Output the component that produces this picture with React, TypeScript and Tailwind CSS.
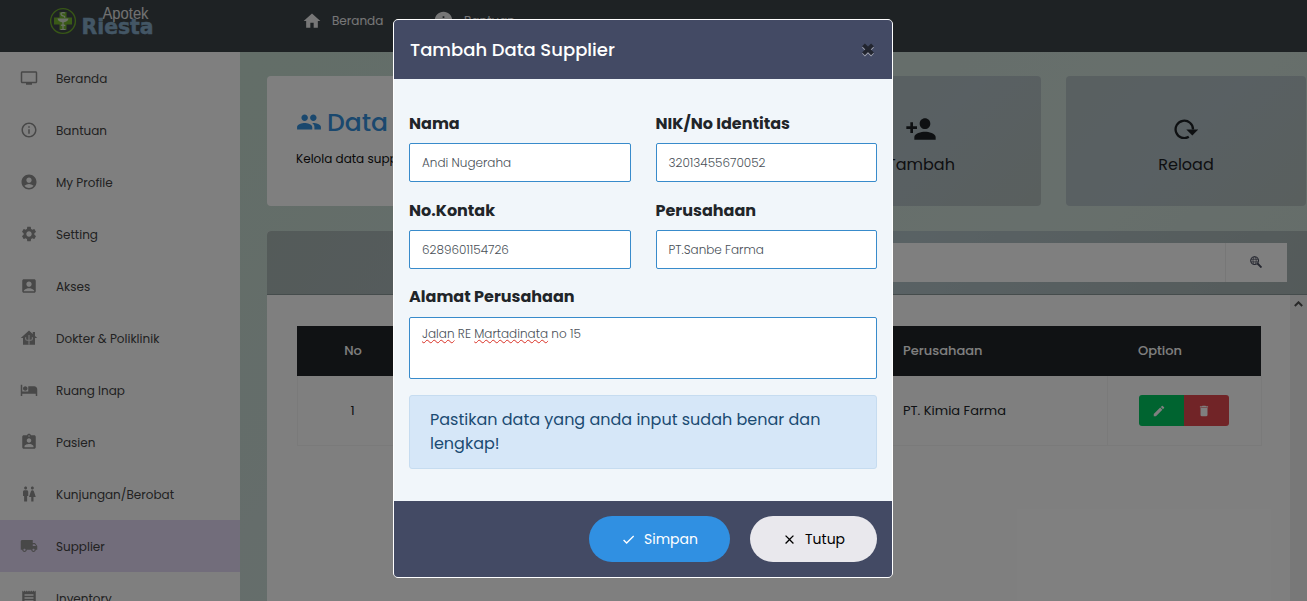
import React from "react";
import type { ReactNode } from "react";
import type { IconType } from "react-icons";
import {
  MdTv, MdInfoOutline, MdInfo, MdAccountCircle, MdSettings, MdAccountBox, MdLocalHotel,
  MdAssignmentInd, MdWc, MdLocalShipping, MdReceipt, MdHome, MdPeople, MdPersonAdd,
  MdEdit, MdDelete, MdCheck, MdClose,
} from "react-icons/md";

function ClinicIcon() {
  return (
    <svg viewBox="0 0 24 24" className="size-[18px]" fill="currentColor">
      <path d="M12 2 1 12h3v9h16v-9h3l-3-2.8V4h-3v2.5z" />
      <path d="M12 8v11M7.5 11v2a2 2 0 0 0 2 2H12M16.500 11v2a2 2 0 0 1-2 2H12M12 17v4" fill="none" stroke="#e8e8e8" strokeWidth="1.5" />
    </svg>
  );
}

function ReloadIcon() {
  return (
    <svg viewBox="0 0 24 20" className="h-5 w-6">
      <path d="M14.800 17.800A8.700 8.700 0 1 1 19 10.500" fill="none" stroke="currentColor" strokeWidth="2.300" />
      <path d="M12.300 10.500h12L18.300 16.500z" fill="currentColor" />
    </svg>
  );
}

function SearchWebIcon() {
  return (
    <svg viewBox="0 0 12 12" className="mb-0.5 mr-px size-3" fill="none" stroke="#4a4e60">
      <circle cx="4.600" cy="4.600" r="3.900" strokeWidth="1.100" />
      <ellipse cx="4.600" cy="4.600" rx="1.600" ry="3.900" strokeWidth=".7" />
      <path d="M1 3.300h7.200M1 5.900h7.200" strokeWidth=".7" />
      <path d="m7.500 7.500 4 4" strokeWidth="1.900" />
    </svg>
  );
}

function Logo() {
  return (
    <div className="flex w-[105px] items-start">
      <svg viewBox="0 0 28 28" className="mt-[7px] size-7 shrink-0">
        <circle cx="13" cy="14" r="12.400" fill="none" stroke="#6fae2c" strokeWidth="1.400" />
        <path d="M9.500 5h7v5.500H22v7h-5.500V23h-7v-5.500H4v-7h5.500z" fill="#74b52f" />
        <path d="M7.500 11.500h11c-.5 2.500-2.500 3.700-5.500 4-3-.3-5-1.500-5.500-4z" fill="#d5dfce" />
        <path d="M13 15v7.500M10.500 22.500h5M15 6c-3-1-5 .5-3.500 2s4 .8 3 2.800M11 18.500c1-1 3.500-1 4 .5" fill="none" stroke="#d5dfce" strokeWidth="1.200" />
      </svg>
      <svg viewBox="0 0 76 37" className="h-[37px] w-[76px] overflow-visible">
        <text x="24.500" y="18.500" textLength="46" lengthAdjust="spacingAndGlyphs" fontFamily="Liberation Sans, sans-serif" fontSize="16" fill="#e4e4e4">Apotek</text>
        <text x="3.500" y="34" textLength="72" lengthAdjust="spacingAndGlyphs" fontFamily="DejaVu Sans, sans-serif" fontWeight="700" fontSize="20.500" fill="#86adca" stroke="#86adca" strokeWidth=".5">Riesta</text>
      </svg>
    </div>
  );
}

const menu: { label: string; icon: IconType | typeof ClinicIcon; active?: boolean }[] = [
  { label: "Beranda", icon: MdTv },
  { label: "Bantuan", icon: MdInfoOutline },
  { label: "My Profile", icon: MdAccountCircle },
  { label: "Setting", icon: MdSettings },
  { label: "Akses", icon: MdAccountBox },
  { label: "Dokter & Poliklinik", icon: ClinicIcon },
  { label: "Ruang Inap", icon: MdLocalHotel },
  { label: "Pasien", icon: MdAssignmentInd },
  { label: "Kunjungan/Berobat", icon: MdWc },
  { label: "Supplier", icon: MdLocalShipping, active: true },
  { label: "Inventory", icon: MdReceipt },
];

function Sidebar() {
  return (
    <aside className="flex w-60 shrink-0 flex-col bg-white">
      {menu.map(({ label, icon: Icon, active }) => (
        <a key={label} className={`flex h-[52px] shrink-0 items-center gap-[18px] pl-5 text-xs text-[#444] ${active ? "bg-[#e4daf6]" : ""}`}>
          <span className="flex w-[18px] text-lg text-[#909090]"><Icon /></span>
          <span className="pt-0.5">{label}</span>
        </a>
      ))}
    </aside>
  );
}

function ActionCard({ icon, label }: { icon: ReactNode; label: string }) {
  return (
    <div className="flex h-[130px] w-60 shrink-0 flex-col items-center rounded-sm bg-[linear-gradient(135deg,#b2c0c2,#b2c0c6_50%,#b2bfbc)] pt-[37px] text-[#1d2124]">
      <div className="flex h-8 items-center text-[32px]">{icon}</div>
      <div className="mt-2 text-base">{label}</div>
    </div>
  );
}

function Content() {
  return (
    <main className="min-w-0 flex-1 overflow-hidden bg-[linear-gradient(135deg,#c6dcd0,#cadbd6_30%,#cfdfd8_60%,#c6d6d0)] pl-[27px] pt-6">
      <div className="flex gap-[25px]">
        <section className="h-[130px] w-[509px] shrink-0 rounded-sm bg-white pl-[29px] pt-[27px]">
          <h1 className="flex items-center gap-[5px] text-[25px] font-medium leading-10 text-[#3490dc]">
            <MdPeople className="mb-0.5 size-[26px]" />Data Supplier
          </h1>
          <p className="mt-1.5 text-xs leading-5 text-[#111]">Kelola data supplier</p>
        </section>
        <ActionCard icon={<MdPersonAdd />} label="Tambah" />
        <ActionCard icon={<ReloadIcon />} label="Reload" />
      </div>
      <section className="mt-[25px] h-[400px] overflow-hidden rounded-tl-sm bg-white">
        <div className="flex h-16 items-center justify-end border-b border-[#8b9898] bg-[linear-gradient(120deg,#a9b6b3,#abb9be_30%,#b3c4c9_60%,#a9b6b5)] pr-5">
          <div className="flex h-[39px] w-[500px] bg-white">
            <div className="flex-1 border-r border-[#eee]" />
            <div className="flex w-[61px] items-center justify-center"><SearchWebIcon /></div>
          </div>
        </div>
        <div className="flex h-[336px]">
          <div className="flex-1 pl-[30px] pt-[31px]">
            <div className="w-[965px] text-[13px]">
              <div className="flex h-[50px] w-[964px] items-center bg-[#212529] pb-px font-medium text-white">
                <div className="w-28 text-center">No</div>
                <div className="w-[494px]" />
                <div className="w-[204px]">Perusahaan</div>
                <div className="w-[154px] pl-[31px]">Option</div>
              </div>
              <div className="flex h-[70px] items-stretch border border-t-0 border-[#f4f4f4] text-[#212529]">
                <div className="flex w-[109px] items-center justify-center pt-px">1</div>
                <div className="w-[496px]" />
                <div className="flex w-[205px] items-center border-r border-[#f4f4f4] pt-px">PT. Kimia Farma</div>
                <div className="flex items-center pl-[31px]">
                  <div className="flex h-[31px] overflow-hidden rounded-[3px] text-sm text-white">
                    <div className="flex w-[45px] items-center bg-[#00c861] pl-[13px]"><MdEdit /></div>
                    <div className="flex w-[45px] items-center bg-[#e3494f] pl-[13px]"><MdDelete /></div>
                  </div>
                </div>
              </div>
            </div>
          </div>
          <div className="flex w-[17px] justify-center bg-[#f1f1f1] pt-1.5">
            <svg viewBox="0 0 9 6" className="h-1.5 w-[9px]"><path d="m.8 5 3.700-3.700L8.200 5" fill="none" stroke="#505050" strokeWidth="2" /></svg>
          </div>
        </div>
      </section>
    </main>
  );
}

function Field({ label, value }: { label: string; value: string }) {
  return (
    <label className="block">
      <span className="block h-[31px] text-base font-bold leading-6 text-[#212529]">{label}</span>
      <span className="flex h-[39px] items-center rounded-xs border border-[#388bcb] bg-white px-3 text-xs font-light text-[#495057]">{value}</span>
    </label>
  );
}

const wavy = "underline decoration-[#d93025] decoration-wavy decoration-1 [text-decoration-skip-ink:none] underline-offset-1";

function Modal() {
  return (
    <div className="flex h-[559px] w-[500px] flex-col overflow-hidden rounded-[5px] border border-white bg-[#f1f6fa]">
      <div className="flex h-[59px] shrink-0 items-center justify-between bg-[#434a64] px-4">
        <h2 className="text-lg font-medium text-white">Tambah Data Supplier</h2>
        <svg viewBox="0 0 16 16" className="size-4 overflow-visible">
          <path d="m3.500 4 9 9m0-9-9 9" stroke="#a2a5b2" strokeWidth="4" />
          <path d="m3.500 2.800 9 9m0-9-9 9" stroke="#22252f" strokeWidth="4" />
        </svg>
      </div>
      <div className="flex-1 px-[15px] pt-[33px]">
        <div className="grid grid-cols-[221.500px_221.500px] gap-x-[25px] gap-y-[17px]">
          <Field label="Nama" value="Andi Nugeraha" />
          <Field label="NIK/No Identitas" value="32013455670052" />
          <Field label="No.Kontak" value="6289601154726" />
          <Field label="Perusahaan" value="PT.Sanbe Farma" />
        </div>
        <div className="mt-4 text-base font-bold leading-6 text-[#212529]">Alamat Perusahaan</div>
        <div className="mt-2 h-[62px] rounded-xs border border-[#388bcb] bg-white px-3 py-1.5 text-xs font-light leading-5 text-[#495057]">
          <span className={wavy}>Jalan</span> RE <span className={wavy}>Martadinata</span> no 15
        </div>
        <div className="mt-4 h-[74px] rounded-[3px] border border-[#c6dcf0] bg-[#d6e7f8] px-5 py-3 text-base leading-6 text-[#1b4b72]">
          Pastikan data yang anda input sudah benar dan lengkap!
        </div>
      </div>
      <div className="flex h-[76px] shrink-0 items-center justify-end gap-5 bg-[#434a64] pr-[15px] text-sm">
        <button className="flex h-[46px] w-[141px] items-center rounded-full bg-[#3090e2] pl-8 text-white"><MdCheck className="mr-2 size-[15px]" />Simpan</button>
        <button className="flex h-[46px] w-[127px] items-center rounded-full bg-[#e9e8ed] pl-8 text-black"><MdClose className="mr-2 size-[15px]" />Tutup</button>
      </div>
    </div>
  );
}

export default function App() {
  return (
    <div className="relative h-[601px] w-[1307px] overflow-hidden font-[Poppins,Inter,sans-serif]">
      <div className="flex h-full flex-col">
        <header className="flex h-[52px] shrink-0 bg-[#3d4449] pl-[50px]">
          <Logo />
          <nav className="ml-[147px] flex h-[41px] items-center text-xs text-[#eee]">
            <MdHome className="size-5" /><span className="ml-[10px] w-[51px]">Beranda</span>
            <MdInfo className="ml-[50px] size-[21px]" /><span className="ml-[10px]">Bantuan</span>
          </nav>
        </header>
        <div className="flex min-h-0 flex-1 overflow-hidden">
          <Sidebar />
          <Content />
        </div>
      </div>
      <div className="absolute inset-0 flex items-start bg-black/50 pl-[393px] pt-[19px]">
        <Modal />
      </div>
    </div>
  );
}
